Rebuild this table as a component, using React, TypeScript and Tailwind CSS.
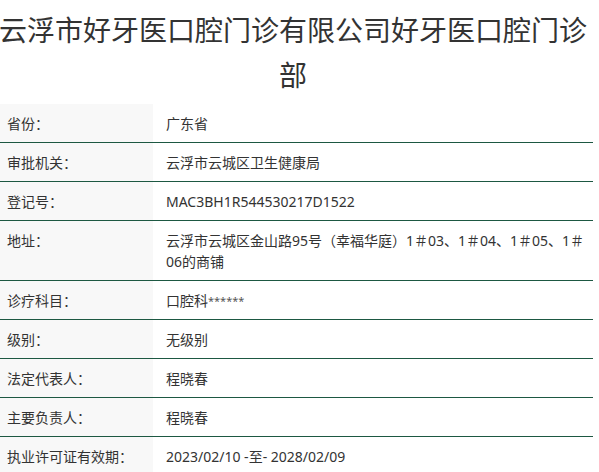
const rows: { label: string; value: React.ReactNode }[] = [
  { label: '省份：', value: '广东省' },
  { label: '审批机关：', value: '云浮市云城区卫生健康局' },
  { label: '登记号：', value: 'MAC3BH1R544530217D1522' },
  { label: '地址：', value: '云浮市云城区金山路95号（幸福华庭）1＃03、1＃04、1＃05、1＃06的商铺' },
  {
    label: '诊疗科目：',
    value: (
      <>
        口腔科<span className="text-[11px] align-top text-[#555]">******</span>
      </>
    ),
  },
  { label: '级别：', value: '无级别' },
  { label: '法定代表人：', value: '程晓春' },
  { label: '主要负责人：', value: '程晓春' },
  { label: '执业许可证有效期：', value: '2023/02/10 -至- 2028/02/09' },
]

function App() {
  return (
    <div className="w-[599px] h-[472px] overflow-hidden bg-white text-[#333] font-['Noto_Sans','Noto_Sans_CJK_SC',sans-serif]">
      <h1 className="-ml-px w-[588px] pt-[8px] text-center text-[28px] leading-[45px] font-normal text-[#333]">
        云浮市好牙医口腔门诊有限公司好牙医口腔门诊部
      </h1>
      <div className="mt-[6px] w-[593px]">
        {rows.map((r) => (
          <div key={r.label} className="flex border-b border-[#1d5842] text-[14px] leading-[21px]">
            <div className="w-[153px] shrink-0 bg-[#f8f8f8] pl-[7px] pt-[9px] pb-[8px]">{r.label}</div>
            <div className="flex-1 bg-white pl-[13px] pr-[2px] pt-[9px] pb-[8px]">{r.value}</div>
          </div>
        ))}
      </div>
    </div>
  )
}

export default App
